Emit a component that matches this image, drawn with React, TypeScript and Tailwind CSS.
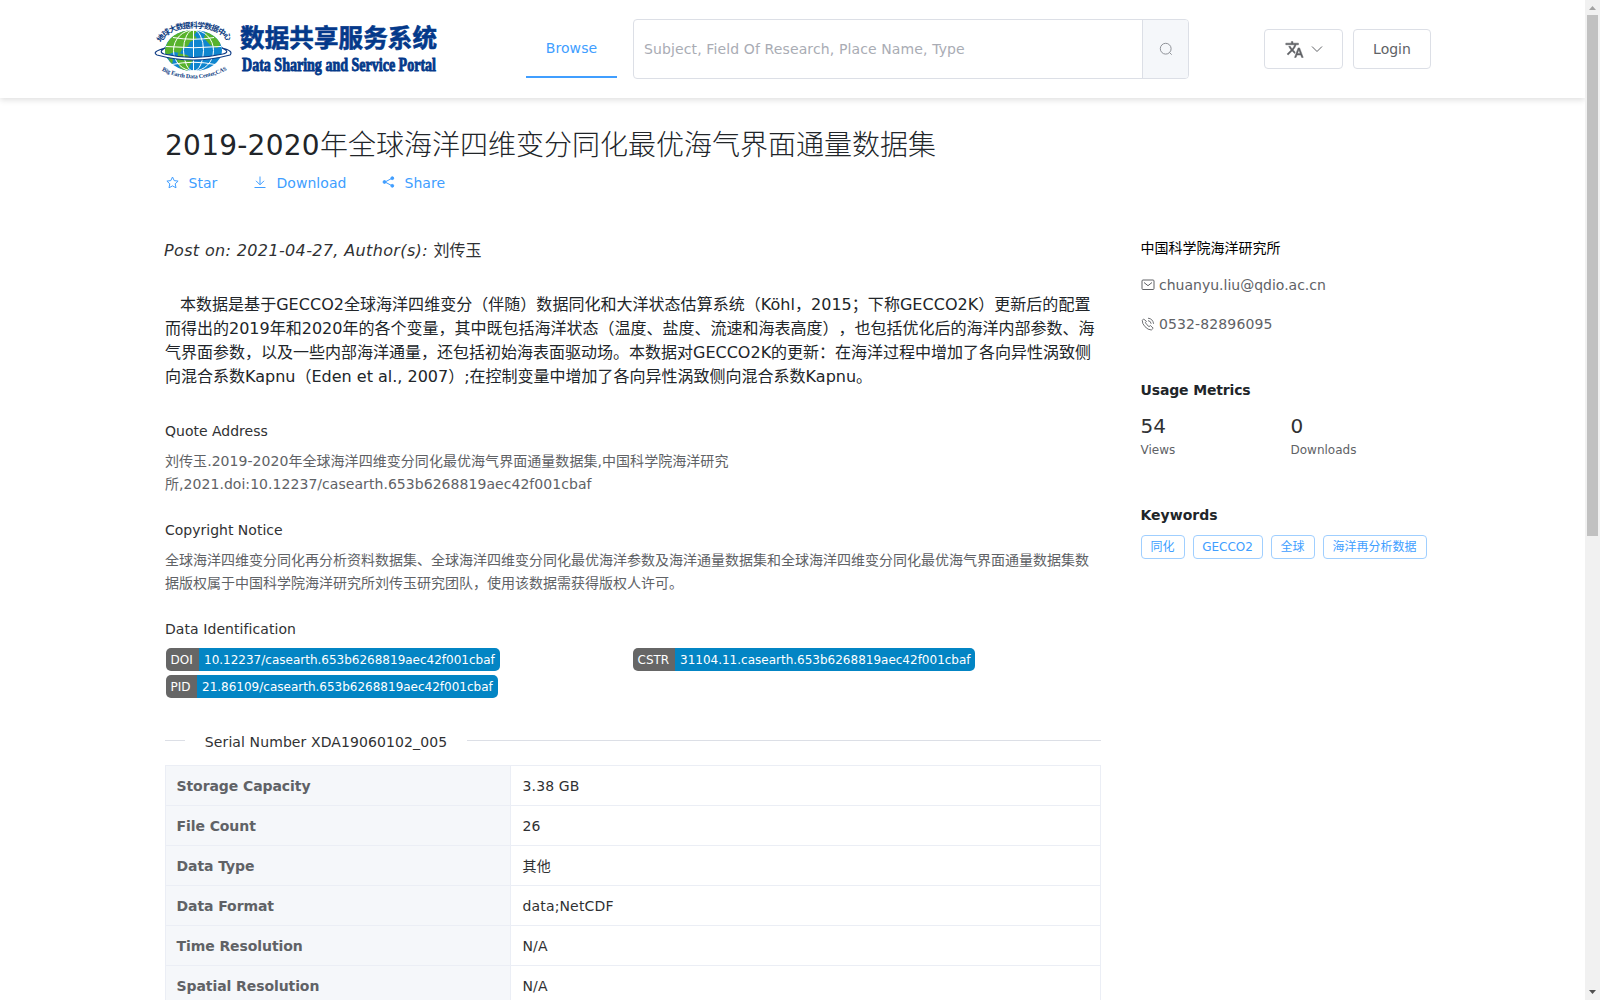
import React from "react";

const rows = [
  ["Storage Capacity", "3.38 GB"],
  ["File Count", "26"],
  ["Data Type", "其他"],
  ["Data Format", "data;NetCDF"],
  ["Time Resolution", "N/A"],
  ["Spatial Resolution", "N/A"],
];

function Globe() {
  return (
    <svg width="80" height="68" viewBox="0 0 80 68" className="shrink-0 overflow-visible">
      <defs>
        <path id="arcTop" d="M8 25 Q 16 10 41 10 T 76 25" />
        <path id="arcBottom" d="M7 51.500 Q 41 70 78 50" />
        <clipPath id="globeClip"><ellipse cx="40.500" cy="32.500" rx="28.500" ry="20.500" /></clipPath>
      </defs>
      <ellipse cx="40.500" cy="32.500" rx="28.500" ry="20.500" fill="#0f86cf" />
      <g clipPath="url(#globeClip)" fill="#58b32c">
        <path d="M12 30 Q18 14 34 12 L45 12 L41 17 L44 20 L37 24 L35 28 L30 30 L27 35 L21 34 L12 38Z" />
        <path d="M25 35 L34 37 L40 42 L37 47 L34 54 L27 50 L24 43Z" />
        <path d="M53 13 L63 18 L68 26 L64 30 L57 27 L51 20Z" />
        <path d="M14 38 L20 41 L19 47Z" />
      </g>
      <g fill="none" stroke="#fff" strokeWidth="1">
        <ellipse cx="40.500" cy="32.500" rx="10" ry="20.500" />
        <ellipse cx="40.500" cy="32.500" rx="20" ry="20.500" />
        <path d="M40.500 12V53M20 19.500Q40.500 23 61 19.500M13 28.500Q40.500 31 68 28.500M19 46.500Q40.500 42 62 46.500" />
      </g>
      <path d="M12 30 Q-2 34 4 37 Q40 47 77 37 Q81 33 69 30 Q78 34 70 36 Q40 43 11 36 Q5 34 12 30Z" fill="#fff" stroke="#0c3a84" strokeWidth="1.100" />
      <text fontSize="7.800" fontWeight="700" fill="#0b3a80" className="font-['Noto_Sans_CJK_SC',sans-serif]">
        <textPath href="#arcTop" textLength="76">地球大数据科学数据中心</textPath>
      </text>
      <text fontSize="6" fontWeight="700" fill="#0b3a80" className="font-['Liberation_Serif',serif]">
        <textPath href="#arcBottom" startOffset="2" textLength="68">Big Earth Data Center,CAS</textPath>
      </text>
    </svg>
  );
}

function Action({ icon, label, className }: { icon: React.ReactNode; label: string; className: string }) {
  return (
    <a className={`flex items-center text-[#409eff] ${className}`}>
      <span className="flex w-[14px] -translate-y-px justify-center">{icon}</span>
      <span className="ml-[9.5px] tracking-[0.05px]">{label}</span>
    </a>
  );
}

function Badge({ name, value, width, nameWidth }: { name: string; value: string; width: string; nameWidth: string }) {
  return (
    <div className={`flex h-[23px] overflow-hidden rounded-[5px] text-xs leading-[24px] whitespace-nowrap text-white ${width}`}>
      <span className={`bg-[#666] pl-[4.5px] ${nameWidth}`}>{name}</span>
      <span className="flex-1 bg-[#0385c4] pl-[5px]">{value}</span>
    </div>
  );
}

export default function App() {
  return (
    <div className="flex h-[1000px] w-[1600px] overflow-hidden bg-white font-['DejaVu_Sans','Noto_Sans_CJK_SC',sans-serif] text-sm text-[#303133] [text-spacing-trim:space-all]">
      <div className="flex w-[1585px] flex-col">
        <header className="flex h-[98px] shrink-0 items-start bg-white pl-[153px] shadow-[0_2px_6px_rgba(0,0,0,0.13)]">
          <div className="mt-[18px] flex w-[373px]">
            <Globe />
            <svg width="230" height="64" viewBox="0 0 230 64" fill="#04398a" className="overflow-visible">
              <text x="7" y="29" fontSize="24.500" fontWeight="700" stroke="#04398a" strokeWidth=".6" textLength="197" className="font-['Noto_Sans_CJK_SC',sans-serif]">数据共享服务系统</text>
              <text x="9" y="53" fontSize="18" fontWeight="700" stroke="#04398a" strokeWidth=".9" textLength="194" lengthAdjust="spacingAndGlyphs" className="font-['Liberation_Serif',serif]">Data Sharing and Service Portal</text>
            </svg>
          </div>
          <div className="mt-[18px] h-[60px] w-[91px] border-b-2 border-[#409eff] text-center leading-[60px] tracking-[0.1px] text-[#409eff]">Browse</div>
          <div className="mt-[19px] ml-4 flex h-[60px] w-[556px] items-stretch rounded-[4px] border border-[#dcdfe6]">
            <div className="flex w-[509px] items-center border-r border-[#dcdfe6] pl-[10px] tracking-[0.12px] text-[#a9acb4]">Subject, Field Of Research, Place Name, Type</div>
            <div className="flex flex-1 items-center justify-center rounded-r-[3px] bg-[#f5f7fa]">
              <svg width="14" height="14" viewBox="0 0 14 14" fill="none" stroke="#909399"><circle cx="6.7" cy="6.7" r="5.4" /><path d="M10.5 10.5l2.2 2.2" /></svg>
            </div>
          </div>
          <button className="mt-[29px] ml-[75px] flex h-10 w-[79px] items-center justify-center gap-[7px] rounded-[4px] border border-[#dcdfe6] text-[#606266]">
            <svg width="19" height="19" viewBox="0 0 24 24" fill="currentColor" stroke="currentColor" strokeWidth=".6">
              <path d="M12.870 15.070l-2.540-2.510.030-.030c1.740-1.940 2.980-4.170 3.710-6.530H17V4h-7V2H8v2H1v1.990h11.170C11.500 7.920 10.440 9.750 9 11.350 8.070 10.320 7.300 9.190 6.690 8h-2c.730 1.630 1.730 3.170 2.980 4.560l-5.090 5.020L4 19l5-5 3.110 3.110.760-2.040zM18.500 10h-2L12 22h2l1.120-3h4.750L21 22h2l-4.500-12zm-2.620 7l1.620-4.330L19.120 17h-3.240z" />
            </svg>
            <svg width="12" height="12" viewBox="0 0 12 12" fill="none" stroke="#606266"><path d="M1 3.5l5 5 5-5" /></svg>
          </button>
          <button className="mt-[29px] ml-[10px] h-10 w-[78px] rounded-[4px] border border-[#dcdfe6] text-[#606266]">Login</button>
        </header>

        <main className="flex flex-1 flex-col pl-[165px]">
          <h1 className="mt-[25px] h-10 text-[28px] leading-10 whitespace-nowrap text-[#212529]"><span className="tracking-[0.25px]">2019-2020</span><span className="font-['Noto_Sans_CJK_SC',sans-serif] font-light">年全球海洋四维变分同化最优海气界面通量数据集</span></h1>
          <div className="mt-[10px] flex h-5 items-center">
            <Action className="w-[88px]" label="Star" icon={<svg width="13" height="13" viewBox="0 0 13 13" fill="none" stroke="#409eff"><path d="M6.5 1l1.7 3.6 3.9.5-2.9 2.7.8 4-3.5-1.9L3 11.8l.8-4L.9 5.1l3.9-.5z" strokeLinejoin="round" /></svg>} />
            <Action className="w-[128px]" label="Download" icon={<svg width="12" height="13" viewBox="0 0 12 13" fill="none" stroke="#409eff"><path d="M6 .5v8M2 4.8l4 4 4-4M.5 11.5h11" /></svg>} />
            <Action className="" label="Share" icon={<svg width="13" height="12" viewBox="0 0 13 12" fill="#409eff" stroke="#409eff"><path d="M10.5 2L3 6l7.5 4" fill="none" /><circle cx="10.3" cy="2.2" r="1.4" /><circle cx="2.5" cy="6" r="1.4" /><circle cx="10.3" cy="9.8" r="1.4" /></svg>} />
          </div>
          <div className="mt-[45px] flex">
            <section className="w-[936px] shrink-0">
              <div className="h-6 pt-px text-base leading-6"><i className="-ml-px tracking-[0.36px]">Post on: 2021-04-27, Author(s): </i>刘传玉</div>
              <p className="mt-[31px] text-base leading-6 whitespace-nowrap text-[#212529]">
                <span className="pl-[15px] tracking-[0.03px]">本数据是基于GECCO2全球海洋四维变分（伴随）数据同化和大洋状态估算系统（Köhl，2015；下称GECCO2K）更新后的配置</span><br />
                而得出的2019年和2020年的各个变量，其中既包括海洋状态（温度、盐度、流速和海表高度），也包括优化后的海洋内部参数、海<br />
                气界面参数，以及一些内部海洋通量，还包括初始海表面驱动场。本数据对GECCO2K的更新：在海洋过程中增加了各向异性涡致侧<br />
                向混合系数Kapnu（Eden et al., 2007）;在控制变量中增加了各向异性涡致侧向混合系数Kapnu。
              </p>
              <h2 className="mt-[31px] leading-[23px]">Quote Address</h2>
              <p className="mt-[7px] leading-[23px] tracking-[0.05px] whitespace-nowrap text-[#606266]">刘传玉.2019-2020年全球海洋四维变分同化最优海气界面通量数据集,中国科学院海洋研究<br />所,2021.doi:10.12237/casearth.653b6268819aec42f001cbaf</p>
              <h2 className="mt-[23px] leading-[23px]">Copyright Notice</h2>
              <p className="mt-[7px] leading-[23px] whitespace-nowrap text-[#606266]">全球海洋四维变分同化再分析资料数据集、全球海洋四维变分同化最优海洋参数及海洋通量数据集和全球海洋四维变分同化最优海气界面通量数据集数<br />据版权属于中国科学院海洋研究所刘传玉研究团队，使用该数据需获得版权人许可。</p>
              <h2 className="mt-[23px] leading-[23px] tracking-[0.07px]">Data Identification</h2>
              <div className="mt-[7px] grid grid-cols-[467px_auto] gap-y-1 pl-px">
                <Badge name="DOI" value="10.12237/casearth.653b6268819aec42f001cbaf" width="w-[334px]" nameWidth="w-[33px]" />
                <Badge name="CSTR" value="31104.11.casearth.653b6268819aec42f001cbaf" width="w-[342px]" nameWidth="w-[42px]" />
                <Badge name="PID" value="21.86109/casearth.653b6268819aec42f001cbaf" width="w-[332px]" nameWidth="w-[31px]" />
              </div>
              <div className="mt-[31px] flex h-[23px] items-center">
                <span className="h-px w-5 bg-[#dcdfe6]" />
                <span className="w-[282px] pt-[3px] text-center leading-[23px] tracking-[0.1px]">Serial Number XDA19060102_005</span>
                <span className="h-px flex-1 bg-[#dcdfe6]" />
              </div>
              <div className="mt-[13px] border-x border-t border-[#ebeef5]">
                {rows.map(([k, v]) => (
                  <div key={k} className="flex h-10 border-b border-[#ebeef5] leading-10">
                    <div className="w-[345px] border-r border-[#ebeef5] bg-[#f5f7fa] pl-[10.5px] font-bold tracking-[-0.08px] text-[#606266]">{k}</div>
                    <div className="pl-[11.5px] tracking-[0.15px]">{v}</div>
                  </div>
                ))}
              </div>
            </section>
            <aside className="ml-[39.5px] flex w-[300px] flex-col">
              <div className="leading-5 text-black">中国科学院海洋研究所</div>
              <div className="mt-[17px] flex h-5 items-center gap-[4.5px] text-[#606266]">
                <svg width="14" height="12" viewBox="0 0 14 12" fill="none" stroke="#606266"><rect x="1" y="1" width="12" height="9.5" rx="1" /><path d="M3 3.5l4 3.2 4-3.2" /></svg>
                <span>chuanyu.liu@qdio.ac.cn</span>
              </div>
              <div className="mt-[19px] flex h-5 items-center gap-[4.5px] text-[#606266]">
                <svg width="14" height="14" viewBox="0 0 14 14" fill="none" stroke="#606266" strokeWidth=".9"><path d="M2.6 2L1.3 3.3Q1 6.5 4 9.7T10.3 13l1.9-1.8-2.7-2.6-1.5 1Q5.6 7.8 4.4 5.7l1-1.4zM7 1.2Q11.8 1.6 12.6 6.8M7 3.6Q9.8 4 10.2 6.8" /></svg>
                <span className="tracking-[0.12px]">0532-82896095</span>
              </div>
              <h3 className="mt-[46px] leading-5 font-bold tracking-[-0.15px] text-[#212529]">Usage Metrics</h3>
              <div className="mt-[14px] grid grid-cols-[150px_150px]">
                <div><div className="text-xl leading-6">54</div><div className="mt-[4px] text-xs leading-4 text-[#606266]">Views</div></div>
                <div><div className="text-xl leading-6">0</div><div className="mt-[4px] text-xs leading-4 text-[#606266]">Downloads</div></div>
              </div>
              <h3 className="mt-[47px] leading-5 font-bold text-[#212529]">Keywords</h3>
              <div className="mt-[10px] flex gap-2 text-center text-xs leading-[22px] whitespace-nowrap text-[#409eff]">
                <span className="h-6 w-11 rounded-[4px] border border-[#a0cfff]">同化</span>
                <span className="h-6 w-[70px] rounded-[4px] border border-[#a0cfff]">GECCO2</span>
                <span className="h-6 w-11 rounded-[4px] border border-[#a0cfff]">全球</span>
                <span className="h-6 w-[104px] rounded-[4px] border border-[#a0cfff]">海洋再分析数据</span>
              </div>
            </aside>
          </div>
        </main>
      </div>
      <div className="flex w-[15px] flex-col items-center bg-[#f1f1f1]">
        <svg width="15" height="15" fill="#a3a3a3"><path d="M4 10h7L7.500 6z" /></svg>
        <div className="h-[521px] w-[11px] bg-[#c1c1c1]" />
        <svg width="15" height="15" className="mt-auto" fill="#505050"><path d="M4 5h7L7.500 9z" /></svg>
      </div>
    </div>
  );
}
